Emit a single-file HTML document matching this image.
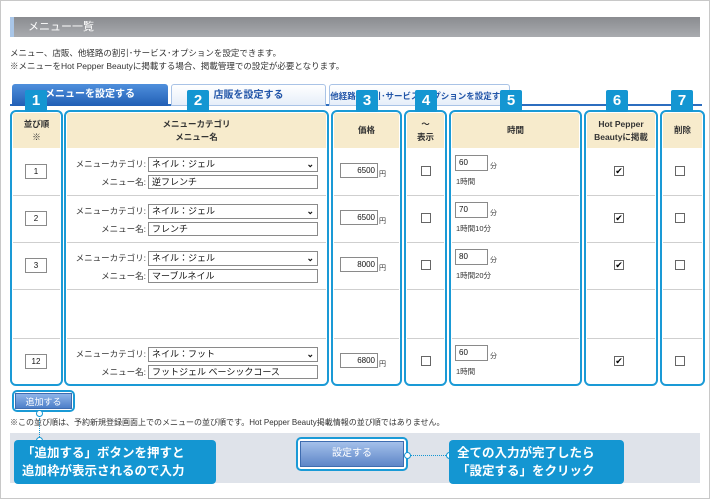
<!DOCTYPE html><html><head><meta charset="utf-8"><style>
*{box-sizing:border-box;margin:0;padding:0}
body{width:710px;height:499px;position:relative;background:#fff;font-family:"Liberation Sans","Noto Sans CJK JP",sans-serif;font-size:9px;color:#333;overflow:hidden}
.a{position:absolute}
.frame{left:0;top:0;width:710px;height:499px;border:1px solid #c8c8c8}
.title{left:10px;top:17px;width:690px;height:20px;background:linear-gradient(#8a8c90,#a9abaf);border-left:4px solid #a9c6e8;color:#fff;font-size:11px;line-height:20px;padding-left:14px}
.tab{top:84px;height:22px;font-size:10px;font-weight:bold;line-height:22px;text-align:center;border-radius:3px 3px 0 0}
.col{top:110px;height:276px;border:2px solid #1a9ad6;border-radius:6px}
.hd{top:113px;height:35px;background:#f7ebcc;text-align:center;font-size:8.5px;font-weight:bold;display:flex;align-items:center;justify-content:center;line-height:13px;color:#333}
.sep{height:1px;background:#cfcfcf}
.badge{top:90px;width:22px;height:22px;background:#1496d2;color:#fff;font-weight:bold;font-size:15px;text-align:center;line-height:22px;border-radius:2px}
.inp{border:1px solid #8a8a8a;background:#fff;font-size:9px;line-height:13px;padding-left:3px;height:15px;color:#111}
.cb{width:10px;height:10px;border:1px solid #666;background:#fff;font-size:9px;line-height:8px;text-align:center;color:#000}
.lbl{font-size:8.5px;text-align:right;width:80px}
.call{background:#1496d2;color:#fff;font-weight:bold;font-size:12.5px;line-height:18px;border-radius:4px;padding:4px 8px}
.dot{width:7px;height:7px;border:1.5px solid #1496d2;background:#fff;border-radius:50%}
</style></head><body>
<div class="a frame"></div>
<div class="a title">メニュー一覧</div>
<div class="a" style="left:10px;top:47px;font-size:8.5px;line-height:13px">メニュー、店販、他経路の割引･サービス･オプションを設定できます。<br>※メニューをHot Pepper Beautyに掲載する場合、掲載管理での設定が必要となります。</div>
<div class="a" style="left:10px;top:104px;width:692px;height:2px;background:#2c6dbf"></div>
<div class="a tab" style="left:12px;width:156px;background:linear-gradient(#4f8fdc,#215fb5);color:#fff">メニューを設定する</div>
<div class="a tab" style="left:171px;width:155px;background:linear-gradient(#fff,#e6eef9);border:1px solid #a9c3e6;color:#2255a8">店販を設定する</div>
<div class="a tab" style="left:329px;width:181px;background:linear-gradient(#fff,#e6eef9);border:1px solid #a9c3e6;color:#2255a8;font-size:8.5px">他経路の割引･サービス･オプションを設定する</div>

<div class="a col" style="left:10px;width:53px"></div>
<div class="a col" style="left:64px;width:265px"></div>
<div class="a col" style="left:331px;width:71px"></div>
<div class="a col" style="left:404px;width:43px"></div>
<div class="a col" style="left:449px;width:133px"></div>
<div class="a col" style="left:584px;width:74px"></div>
<div class="a col" style="left:660px;width:45px"></div>

<div class="a hd" style="left:13px;width:47px">並び順<br>※</div>
<div class="a hd" style="left:67px;width:259px">メニューカテゴリ<br>メニュー名</div>
<div class="a hd" style="left:334px;width:65px">価格</div>
<div class="a hd" style="left:407px;width:37px">～<br>表示</div>
<div class="a hd" style="left:452px;width:127px">時間</div>
<div class="a hd" style="left:587px;width:68px">Hot Pepper<br>Beautyに掲載</div>
<div class="a hd" style="left:663px;width:39px">削除</div>

<div class="a badge" style="left:25px">1</div>
<div class="a badge" style="left:187px">2</div>
<div class="a badge" style="left:356px">3</div>
<div class="a badge" style="left:415px">4</div>
<div class="a badge" style="left:500px">5</div>
<div class="a badge" style="left:606px">6</div>
<div class="a badge" style="left:671px">7</div>

<div id="seps"></div>
<div id="rows"></div>
<div class="a" style="left:12px;top:390px;width:63px;height:22px;border:2px solid #1a9ad6;border-radius:5px"></div>
<div class="a" style="left:15px;top:393px;width:57px;height:16px;background:linear-gradient(#8fb4e8,#4d7fc9);color:#fff;font-size:9px;text-align:center;line-height:16px;border:1px solid #3e6cb0">追加する</div>
<div class="a" style="left:10px;top:417px;font-size:8px">※この並び順は、予約新規登録画面上でのメニューの並び順です。Hot Pepper Beauty掲載情報の並び順ではありません。</div>
<div class="a" style="left:10px;top:433px;width:690px;height:50px;background:#dfe3ea"></div>
<div class="a" style="left:39px;top:413px;width:0;height:30px;border-left:1px dotted #1496d2"></div>
<div class="a dot" style="left:36px;top:410px"></div>
<div class="a dot" style="left:36px;top:437px"></div>
<div class="a call" style="left:14px;top:440px;width:202px;height:44px;padding:4px 8px">「追加する」ボタンを押すと<br>追加枠が表示されるので入力</div>
<div class="a" style="left:296px;top:437px;width:112px;height:34px;border:2px solid #1a9ad6;border-radius:5px;background:#fff"></div>
<div class="a" style="left:300px;top:441px;width:104px;height:26px;background:linear-gradient(#a4c0ea,#5e86c8);border:1px solid #3e6cb0;color:#fff;font-size:10px;text-align:center;line-height:24px">設定する</div>
<div class="a" style="left:408px;top:455px;width:42px;border-top:1px dotted #1496d2"></div>
<div class="a dot" style="left:404px;top:452px"></div>
<div class="a dot" style="left:446px;top:452px"></div>
<div class="a call" style="left:449px;top:440px;width:175px;height:44px">全ての入力が完了したら<br>「設定する」をクリック</div>
<script>
var C=[[13,47],[67,259],[334,65],[407,37],[452,127],[587,68],[663,39]],s="";
[195,242,289,338].forEach(function(y){C.forEach(function(c){s+='<div class="a sep" style="left:'+c[0]+'px;top:'+y+'px;width:'+c[1]+'px"></div>';});});
document.getElementById("seps").innerHTML=s;
var R=[[148,"1","ネイル：ジェル","逆フレンチ","6500","60","1時間"],[195,"2","ネイル：ジェル","フレンチ","6500","70","1時間10分"],[242,"3","ネイル：ジェル","マーブルネイル","8000","80","1時間20分"],[338,"12","ネイル：フット","フットジェル ベーシックコース","6800","60","1時間"]];
var h="";R.forEach(function(r){var t=r[0];
h+='<div class="a inp" style="left:25px;top:'+(t+16)+'px;width:22px;text-align:center;padding:0;font-size:8px">'+r[1]+'</div>';
h+='<div class="a lbl" style="left:66px;top:'+(t+10)+'px">メニューカテゴリ:</div><div class="a lbl" style="left:66px;top:'+(t+28)+'px">メニュー名:</div>';
h+='<div class="a inp" style="left:148px;top:'+(t+9)+'px;width:170px">'+r[2]+'<span style="position:absolute;right:3px;top:0;font-weight:bold">&#8964;</span></div>';
h+='<div class="a inp" style="left:148px;top:'+(t+27)+'px;width:170px;height:14px">'+r[3]+'</div>';
h+='<div class="a inp" style="left:340px;top:'+(t+15)+'px;width:38px;text-align:right;padding-right:2px;font-size:8px">'+r[4]+'</div><div class="a" style="left:379px;top:'+(t+21)+'px;font-size:7px">円</div>';
h+='<div class="a cb" style="left:421px;top:'+(t+18)+'px"></div>';
h+='<div class="a inp" style="left:455px;top:'+(t+7)+'px;width:33px;height:16px;font-size:8px">'+r[5]+'</div><div class="a" style="left:490px;top:'+(t+13)+'px;font-size:7px">分</div><div class="a" style="left:456px;top:'+(t+28)+'px;font-size:7.5px">'+r[6]+'</div>';
h+='<div class="a cb" style="left:614px;top:'+(t+18)+'px">&#10004;</div>';
h+='<div class="a cb" style="left:675px;top:'+(t+18)+'px"></div>';});
document.getElementById("rows").innerHTML=h;
</script>
</body></html>
